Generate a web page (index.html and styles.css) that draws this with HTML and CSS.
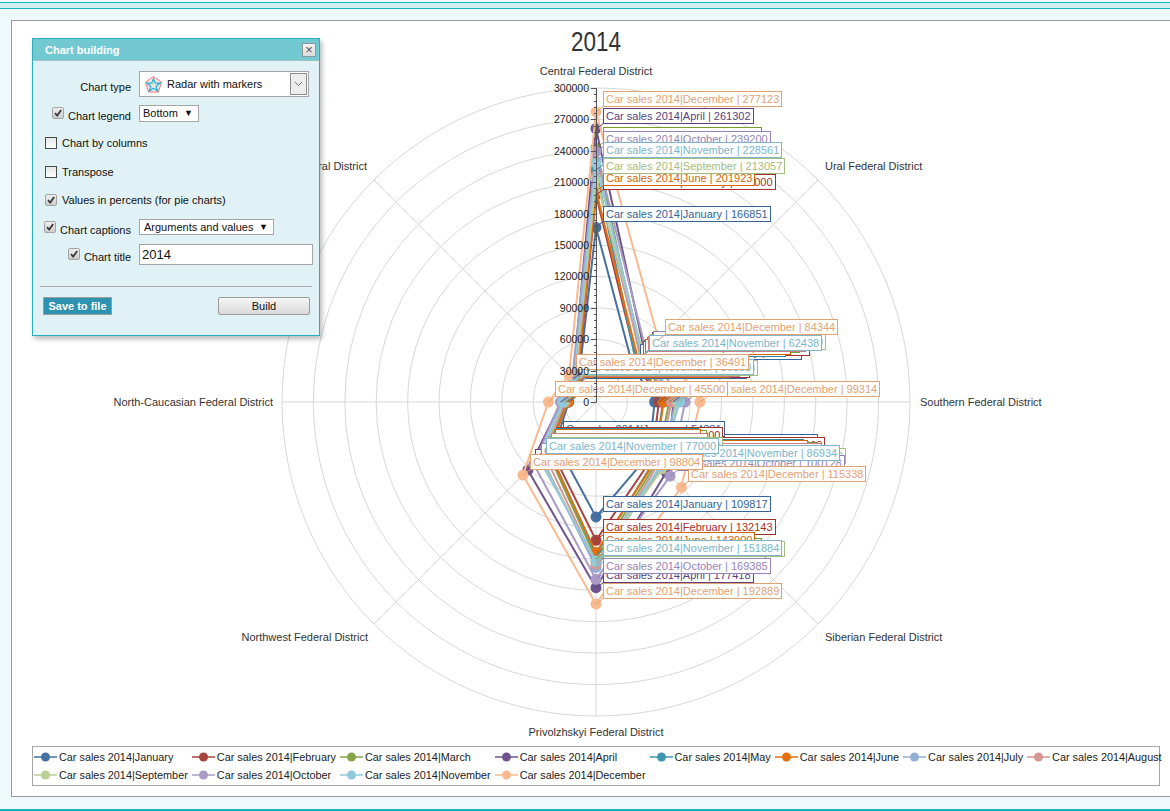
FILE: index.html
```html
<!DOCTYPE html>
<html lang="en">
<head>
<meta charset="utf-8">
<title>Chart building</title>
<link rel="stylesheet" href="styles.css">
</head>
<body>
<div class="topbar"></div>
<main class="panel">
  <svg id="chart" class="chart" viewBox="12 21 1158 724" width="1158" height="724" xmlns="http://www.w3.org/2000/svg"></svg>
  <div class="legend">
    <div class="lg-item"><svg class="lg-icon" viewBox="0 0 23 12"><line x1="0" y1="6" x2="23" y2="6" stroke="#46709f" stroke-width="1.5"/><circle cx="11.5" cy="6" r="4.5" fill="#46709f"/></svg><span>Car sales 2014|January</span></div>
    <div class="lg-item"><svg class="lg-icon" viewBox="0 0 23 12"><line x1="0" y1="6" x2="23" y2="6" stroke="#a8423f" stroke-width="1.5"/><circle cx="11.5" cy="6" r="4.5" fill="#a8423f"/></svg><span>Car sales 2014|February</span></div>
    <div class="lg-item"><svg class="lg-icon" viewBox="0 0 23 12"><line x1="0" y1="6" x2="23" y2="6" stroke="#86a44a" stroke-width="1.5"/><circle cx="11.5" cy="6" r="4.5" fill="#86a44a"/></svg><span>Car sales 2014|March</span></div>
    <div class="lg-item"><svg class="lg-icon" viewBox="0 0 23 12"><line x1="0" y1="6" x2="23" y2="6" stroke="#6e548d" stroke-width="1.5"/><circle cx="11.5" cy="6" r="4.5" fill="#6e548d"/></svg><span>Car sales 2014|April</span></div>
    <div class="lg-item"><svg class="lg-icon" viewBox="0 0 23 12"><line x1="0" y1="6" x2="23" y2="6" stroke="#3d96ae" stroke-width="1.5"/><circle cx="11.5" cy="6" r="4.5" fill="#3d96ae"/></svg><span>Car sales 2014|May</span></div>
    <div class="lg-item"><svg class="lg-icon" viewBox="0 0 23 12"><line x1="0" y1="6" x2="23" y2="6" stroke="#e2700f" stroke-width="1.5"/><circle cx="11.5" cy="6" r="4.5" fill="#e2700f"/></svg><span>Car sales 2014|June</span></div>
    <div class="lg-item"><svg class="lg-icon" viewBox="0 0 23 12"><line x1="0" y1="6" x2="23" y2="6" stroke="#93aed4" stroke-width="1.5"/><circle cx="11.5" cy="6" r="4.5" fill="#93aed4"/></svg><span>Car sales 2014|July</span></div>
    <div class="lg-item"><svg class="lg-icon" viewBox="0 0 23 12"><line x1="0" y1="6" x2="23" y2="6" stroke="#d59593" stroke-width="1.5"/><circle cx="11.5" cy="6" r="4.5" fill="#d59593"/></svg><span>Car sales 2014|August</span></div>
    <div class="lg-item"><svg class="lg-icon" viewBox="0 0 23 12"><line x1="0" y1="6" x2="23" y2="6" stroke="#b9cf95" stroke-width="1.5"/><circle cx="11.5" cy="6" r="4.5" fill="#b9cf95"/></svg><span>Car sales 2014|September</span></div>
    <div class="lg-item"><svg class="lg-icon" viewBox="0 0 23 12"><line x1="0" y1="6" x2="23" y2="6" stroke="#a99bc5" stroke-width="1.5"/><circle cx="11.5" cy="6" r="4.5" fill="#a99bc5"/></svg><span>Car sales 2014|October</span></div>
    <div class="lg-item"><svg class="lg-icon" viewBox="0 0 23 12"><line x1="0" y1="6" x2="23" y2="6" stroke="#92c8dc" stroke-width="1.5"/><circle cx="11.5" cy="6" r="4.5" fill="#92c8dc"/></svg><span>Car sales 2014|November</span></div>
    <div class="lg-item"><svg class="lg-icon" viewBox="0 0 23 12"><line x1="0" y1="6" x2="23" y2="6" stroke="#f9ba8f" stroke-width="1.5"/><circle cx="11.5" cy="6" r="4.5" fill="#f9ba8f"/></svg><span>Car sales 2014|December</span></div>
  </div>
</main>
<div class="bottombar"></div>

<section class="dialog">
  <header class="dlg-head">
    <span class="dlg-title">Chart building</span>
    <span class="dlg-close">&#215;</span>
  </header>
  <div class="dlg-form">
    <div class="lbl"><span class="lbl-text">Chart type</span></div>
    <div class="sel sel-type">
      <svg class="ico-radar" viewBox="0 0 19 19">
        <polygon points="9.5,1.5 17.5,7.2 14.4,17 4.6,17 1.5,7.2" fill="#fbe3e3" stroke="#f07a7a" stroke-width="1"/>
        <line x1="9.5" y1="9.5" x2="9.5" y2="1.5" stroke="#c9c9c9" stroke-width="0.6"/>
        <line x1="9.5" y1="9.5" x2="17.5" y2="7.2" stroke="#c9c9c9" stroke-width="0.6"/>
        <line x1="9.5" y1="9.5" x2="1.5" y2="7.2" stroke="#c9c9c9" stroke-width="0.6"/>
        <polygon points="9.5,4 11.2,8 16,8.3 12.2,11.3 13.6,16 9.5,13.2 5.4,16 6.8,11.3 3,8.3 7.8,8" fill="none" stroke="#23b4d8" stroke-width="1.3"/>
      </svg>
      <span>Radar with markers</span>
      <span class="sel-btn"><svg viewBox="0 0 9 6" width="9" height="6"><polyline points="1,1 4.5,4.5 8,1" fill="none" stroke="#777" stroke-width="1"/></svg></span>
    </div>

    <div class="lbl"><span class="cb on"><svg viewBox="0 0 10 10" width="10" height="10"><polyline points="2,5.2 4.2,7.6 8.2,2" fill="none" stroke="#3a3a3a" stroke-width="1.8"/></svg></span><span class="lbl-text">Chart legend</span></div>
    <div class="sel sel-small"><span>Bottom</span><span class="arrow">&#9660;</span></div>

    <div class="full"><span class="cb"></span><span>Chart by columns</span></div>
    <div class="full"><span class="cb"></span><span>Transpose</span></div>
    <div class="full"><span class="cb on"><svg viewBox="0 0 10 10" width="10" height="10"><polyline points="2,5.2 4.2,7.6 8.2,2" fill="none" stroke="#3a3a3a" stroke-width="1.8"/></svg></span><span>Values in percents (for pie charts)</span></div>

    <div class="lbl"><span class="cb on"><svg viewBox="0 0 10 10" width="10" height="10"><polyline points="2,5.2 4.2,7.6 8.2,2" fill="none" stroke="#3a3a3a" stroke-width="1.8"/></svg></span><span class="lbl-text">Chart captions</span></div>
    <div class="sel sel-args"><span>Arguments and values</span><span class="arrow">&#9660;</span></div>

    <div class="lbl"><span class="cb on"><svg viewBox="0 0 10 10" width="10" height="10"><polyline points="2,5.2 4.2,7.6 8.2,2" fill="none" stroke="#3a3a3a" stroke-width="1.8"/></svg></span><span class="lbl-text">Chart title</span></div>
    <div class="inp">2014</div>
  </div>
  <div class="dlg-sep"></div>
  <div class="dlg-foot">
    <span class="btn-save">Save to file</span>
    <span class="btn-build">Build</span>
  </div>
</section>

<script src="app.js"></script>
</body>
</html>
```

FILE: styles.css
```css
* { box-sizing: border-box; }
html, body { margin: 0; padding: 0; }
body {
  width: 1170px;
  height: 811px;
  overflow: hidden;
  position: relative;
  background: #eff8fa;
  font-family: "Liberation Sans", Arial, sans-serif;
  font-size: 11px;
  color: #111;
}
.topbar {
  height: 7px;
  margin-top: 2px;
  border-top: 1px solid #14b3be;
  border-bottom: 1px solid #14b3be;
  background: #d3eef1;
}
.panel {
  display: block;
  margin: 11px 0 0 11px;
  width: 1170px;
  height: 777px;
  border: 1px solid #9a9a9a;
  background: #fff;
}
.chart { display: block; width: 1158px; height: 724px; }
.chart text { font-family: "Liberation Sans", Arial, sans-serif; }
.chart .grid circle, .chart .grid line { fill: none; stroke: #d8d8d8; stroke-width: 1; }
.chart .axis line { stroke: #555; stroke-width: 1; }
.chart .dist { font-size: 11px; fill: #333; }
.chart .val { font-size: 10.5px; fill: #222; }
.chart .lbl { font-size: 11px; }
.chart .title { font-size: 27px; fill: #333; }

.legend {
  margin: 1px 0 0 20px;
  width: 1128px;
  height: 40px;
  border: 1px solid #a6a6a6;
  padding: 1px 0 0 1px;
  display: grid;
  grid-template-columns: repeat(8, max-content);
  grid-auto-rows: 18px;
  column-gap: 4px;
  align-items: center;
}
.lg-item { display: flex; align-items: center; white-space: nowrap; color: #222; font-size: 10.85px; }
.lg-icon { width: 23px; height: 12px; margin-right: 2px; flex: none; }
.bottombar { margin-top: 12px; height: 2px; background: #14b3be; }

/* dialog */
.dialog {
  position: absolute;
  left: 32px;
  top: 38px;
  width: 288px;
  height: 298px;
  border: 1px solid #29afba;
  background: #e0f2f5;
  box-shadow: 2px 3px 5px rgba(0, 0, 0, 0.28);
}
.dlg-head {
  height: 22px;
  background: #72c9d2;
  border-bottom: 1px solid #a0c2c6;
  display: flex;
  align-items: center;
  justify-content: space-between;
  padding: 0 3px 0 12px;
}
.dlg-title { color: #fff; font-weight: bold; font-size: 11px; }
.dlg-close {
  width: 14px;
  height: 14px;
  border: 1px solid #8c9a9c;
  background: linear-gradient(#f4f4f4, #dadada);
  display: flex;
  align-items: center;
  justify-content: center;
  color: #555;
  font-size: 13px;
  line-height: 1;
}
.dlg-form {
  display: grid;
  grid-template-columns: 86px 174px;
  column-gap: 8px;
  grid-template-rows: 28px 30px 29px 29px 28px 26px 28px;
  padding: 9px 0 0 12px;
  align-items: center;
}
.lbl { justify-self: end; display: flex; align-items: center; gap: 4px; white-space: nowrap; }
.lbl-text { padding-top: 5px; }
.full { grid-column: 1 / 3; display: flex; align-items: center; gap: 5px; white-space: nowrap; }
.cb {
  width: 12px;
  height: 12px;
  flex: none;
  border: 1px solid #4a4a4a;
  background: linear-gradient(#e6e6e6, #fdfdfd);
}
.cb.on {
  border-color: #a3a3a3;
  border-radius: 2px;
  background: linear-gradient(#efefef, #cdcdcd);
  display: flex;
  align-items: center;
  justify-content: center;
}
.sel { background: #fff; border: 1px solid #a5a5a5; display: flex; align-items: center; justify-self: start; white-space: nowrap; }
.sel-type { width: 170px; height: 26px; padding-left: 4px; }
.ico-radar { width: 19px; height: 19px; margin-right: 4px; flex: none; }
.sel-btn {
  margin-left: auto;
  margin-right: 1px;
  width: 17px;
  height: 22px;
  border: 1px solid #8c8c8c;
  background: #ededed;
  display: flex;
  align-items: center;
  justify-content: center;
}
.sel-small { width: 60px; height: 17px; padding: 0 5px 0 3px; justify-content: space-between; }
.sel-args { width: 135px; height: 16px; padding: 0 5px 0 4px; justify-content: space-between; }
.arrow { font-size: 9px; color: #111; }
.inp {
  width: 174px;
  height: 21px;
  background: #fff;
  border: 1px solid #a5a5a5;
  font-size: 13px;
  padding-left: 2px;
  display: flex;
  align-items: center;
  color: #111;
}
.dlg-sep { margin: 18px 7px 0 7px; height: 1px; background: #a9a9a9; }
.dlg-foot { display: flex; justify-content: space-between; padding: 10px 9px 0 10px; }
.btn-save {
  width: 69px;
  height: 18px;
  background: #2e92b1;
  border: 1px solid #9b9b9b;
  color: #fff;
  font-weight: bold;
  font-size: 11px;
  display: flex;
  align-items: center;
  justify-content: center;
}
.btn-build {
  width: 92px;
  height: 18px;
  border: 1px solid #9b9b9b;
  border-radius: 2px;
  background: linear-gradient(#f7f7f7, #d9d9d9);
  color: #111;
  font-size: 11px;
  display: flex;
  align-items: center;
  justify-content: center;
}
```

FILE: app.js
```js
(function () {
  var NS = 'http://www.w3.org/2000/svg';
  var svg = document.getElementById('chart');
  function el(tag, attrs, parent) {
    var e = document.createElementNS(NS, tag);
    for (var k in attrs) { if (attrs.hasOwnProperty(k)) e.setAttribute(k, attrs[k]); }
    (parent || svg).appendChild(e);
    return e;
  }
  var cx = 596, cy = 402, R = 314, MAX = 300000, STEP = R / 10;
  var months = ['January', 'February', 'March', 'April', 'May', 'June', 'July', 'August', 'September', 'October', 'November', 'December'];
  var colors = ['#46709f', '#a8423f', '#86a44a', '#6e548d', '#3d96ae', '#e2700f', '#93aed4', '#d59593', '#b9cf95', '#a99bc5', '#92c8dc', '#f9ba8f'];
  var lc = ['#35639a', '#a2302d', '#779a35', '#5b4181', '#2f89a0', '#d2640a', '#7d9cc8', '#c97f7d', '#a5bd7e', '#9686b6', '#7db6ca', '#e2a272'];
  /* Central, Ural, Southern, Siberian, Privolzhskyi, Northwest, North-Caucasian, Far Eastern */
  var data = [
    [166851, 49461, 56000, 71539, 109817, 54381, 26000, 24000],
    [198000, 55000, 60000, 76000, 132143, 62000, 27000, 25000],
    [243000, 60000, 70000, 82000, 150000, 66000, 29000, 27000],
    [261302, 66000, 74000, 95000, 177418, 92000, 33000, 31000],
    [222000, 54000, 64000, 79000, 146000, 64000, 27500, 25500],
    [201923, 57000, 64500, 80000, 143900, 65000, 26500, 26000],
    [230000, 63000, 76000, 88000, 158000, 74000, 30000, 28000],
    [216000, 61000, 72000, 84000, 155000, 70000, 29500, 27500],
    [213057, 64000, 78000, 90000, 152500, 76000, 31000, 29000],
    [239200, 68000, 85000, 100128, 169385, 84000, 34000, 32000],
    [228561, 62438, 80000, 86934, 151884, 77000, 32000, 30000],
    [277123, 84344, 99314, 115338, 192889, 98804, 45500, 36491]
  ];
  function pt(i, v) {
    var a = (i * 45 - 90) * Math.PI / 180;
    var r = v / MAX * R;
    return [cx + r * Math.cos(a), cy + r * Math.sin(a)];
  }

  var grid = el('g', { 'class': 'grid' });
  var k, i;
  for (k = 1; k <= 10; k++) el('circle', { cx: cx, cy: cy, r: (k * STEP).toFixed(2) }, grid);
  for (i = 0; i < 8; i++) {
    var q = pt(i, MAX);
    el('line', { x1: cx, y1: cy, x2: q[0].toFixed(2), y2: q[1].toFixed(2) }, grid);
  }

  var dl = [
    ['Central Federal District', 596, 75, 'middle'],
    ['Ural Federal District', 825, 170, 'start'],
    ['Southern Federal District', 920, 406, 'start'],
    ['Siberian Federal District', 825, 641, 'start'],
    ['Privolzhskyi Federal District', 596, 736, 'middle'],
    ['Northwest Federal District', 368, 641, 'end'],
    ['North-Caucasian Federal District', 273, 406, 'end'],
    ['Far Eastern Federal District', 367, 170, 'end']
  ];
  dl.forEach(function (d) {
    var t = el('text', { x: d[1], y: d[2], 'text-anchor': d[3], 'class': 'dist' });
    t.textContent = d[0];
  });

  var series = el('g', {});
  data.forEach(function (vals, s) {
    var pts = vals.map(function (v, j) { return pt(j, v); });
    el('polygon', {
      points: pts.map(function (p) { return p[0].toFixed(1) + ',' + p[1].toFixed(1); }).join(' '),
      fill: 'none', stroke: colors[s], 'stroke-width': 2, 'stroke-linejoin': 'round'
    }, series);
    pts.forEach(function (p) {
      el('circle', { cx: p[0].toFixed(1), cy: p[1].toFixed(1), r: 5.5, fill: colors[s] }, series);
    });
  });

  var labels = el('g', {});
  data.forEach(function (vals, s) {
    vals.forEach(function (v, j) {
      var p = pt(j, v);
      var px = Math.round(p[0]), py = Math.round(p[1]);
      var g = el('g', {}, labels);
      el('line', { x1: px, y1: py, x2: px + 8, y2: py - 6, stroke: lc[s], 'stroke-width': 1 }, g);
      var rect = el('rect', { x: px + 7.5, y: py - 20.5, height: 15, width: 10, fill: '#fff', 'fill-opacity': 0.95, stroke: lc[s], 'stroke-width': 1 }, g);
      var t = el('text', { x: px + 10, y: py - 9, fill: lc[s], 'class': 'lbl' }, g);
      t.textContent = 'Car sales 2014|' + months[s] + ' | ' + v;
      var w = 160;
      try { w = t.getComputedTextLength(); } catch (e) { }
      rect.setAttribute('width', Math.round(w + 5));
    });
  });

  var ax = el('g', { 'class': 'axis' });
  el('line', { x1: cx + 0.5, y1: (cy - R).toFixed(1), x2: cx + 0.5, y2: cy }, ax);
  for (var m = 0; m <= 50; m++) {
    var y = Math.round(cy - m * STEP / 5) + 0.5;
    var len = (m % 5 === 0) ? 5 : 2;
    el('line', { x1: cx - len, y1: y, x2: cx + 0.5, y2: y }, ax);
  }
  for (k = 0; k <= 10; k++) {
    var vt = el('text', { x: 589, y: (cy - k * STEP + 4).toFixed(1), 'text-anchor': 'end', 'class': 'val' });
    vt.textContent = String(k * 30000);
  }

  var title = el('text', { x: 596, y: 51, 'text-anchor': 'middle', 'class': 'title', textLength: 50, lengthAdjust: 'spacingAndGlyphs' });
  title.textContent = '2014';
})();
```
